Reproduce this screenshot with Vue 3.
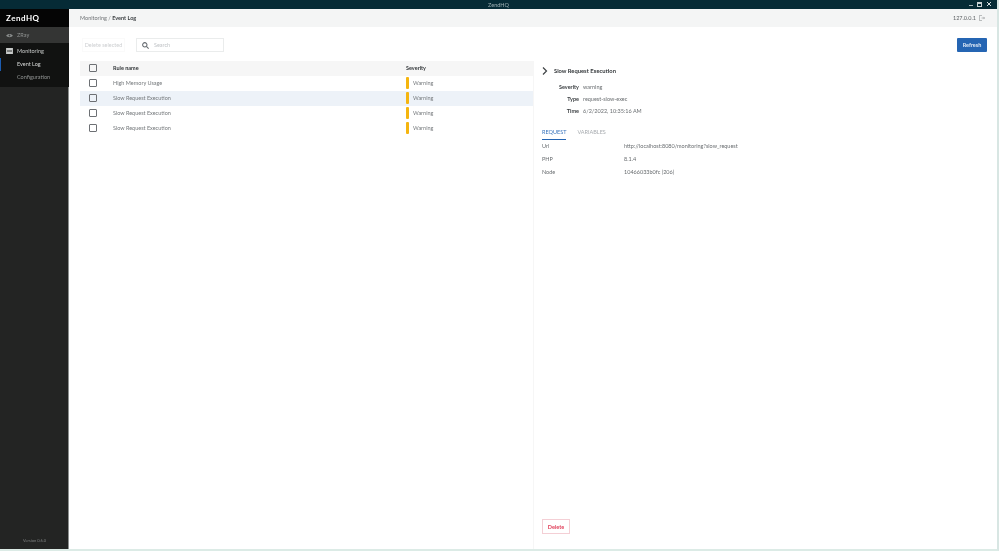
<script setup>
const rows = [
  { name: 'High Memory Usage', active: false },
  { name: 'Slow Request Execution', active: true },
  { name: 'Slow Request Execution', active: false },
  { name: 'Slow Request Execution', active: false },
]
const meta = [
  ['Severity', 'warning'],
  ['Type', 'request-slow-exec'],
  ['Time', '6/2/2022, 10:35:16 AM'],
]
const info = [
  ['Url', 'http://localhost:8080/monitoring?slow_request'],
  ['PHP', '8.1.4'],
  ['Node', '10466033b0fc (206)'],
]
</script>

<template>
  <div class="window">
    <header class="titlebar">
      <span class="title">ZendHQ</span>
      <div class="controls">
        <span class="min"></span>
        <span class="max"></span>
        <svg class="close" width="6" height="6" viewBox="0 0 6 6"><path d="M1 1l4 4M5 1L1 5" stroke="#d5dfe1" stroke-width="1" /></svg>
      </div>
    </header>
    <div class="body">
      <aside class="sidebar">
        <div class="logo">ZendHQ</div>
        <div class="nav-item zray">
          <svg width="7" height="5" viewBox="0 0 8 6"><path d="M0 3c1.500-2.600 6.500-2.600 8 0-1.500 2.600-6.500 2.600-8 0z" fill="#8b8f8e" /><circle cx="4" cy="3" r="1.100" fill="#3a3c3b" /></svg>
          <span>ZRay</span>
        </div>
        <div class="group">
          <div class="nav-item monitoring">
            <svg width="7" height="6" viewBox="0 0 8 7"><path d="M0 0h8v7H0z" fill="#c9cccb" /><path d="M1 3h6v1H1z" fill="#151716" /></svg>
            <span>Monitoring</span>
          </div>
          <div class="sub current">Event Log</div>
          <div class="sub">Configuration</div>
        </div>
        <div class="version">Version 0.6.0</div>
      </aside>
      <main class="main">
        <div class="topbar">
          <div class="crumb">Monitoring / <b>Event Log</b></div>
          <div class="host">
            <span>127.0.0.1</span>
            <svg width="6" height="6" viewBox="0 0 7 7" fill="none" stroke="#8c8f90" stroke-width=".7"><path d="M3.500.5H.5v6h3M3 3.500h3.500M5.200 2.200l1.300 1.300-1.300 1.300" /></svg>
          </div>
        </div>
        <div class="toolbar">
          <div class="tools-left">
            <button class="ghost">Delete selected</button>
            <div class="search">
              <svg width="7" height="7" viewBox="0 0 8 8" fill="none" stroke="#666b70" stroke-width="1.200"><circle cx="3.200" cy="3.200" r="2.500" /><path d="M5 5l2.600 2.600" /></svg>
              <span>Search</span>
            </div>
          </div>
          <button class="refresh">Refresh</button>
        </div>
        <div class="content">
          <section class="list">
            <div class="row head">
              <span class="check"></span>
              <span class="name">Rule name</span>
              <span class="severity">Severity</span>
            </div>
            <div v-for="(row, i) in rows" :key="i" class="row" :class="{ active: row.active }">
              <span class="check"></span>
              <span class="name">{{ row.name }}</span>
              <span class="severity"><i class="bar"></i>Warning</span>
            </div>
          </section>
          <section class="detail">
            <div class="detail-title">
              <svg width="6" height="8" viewBox="0 0 6 8" fill="none" stroke="#3f4346" stroke-width="1.200"><path d="M1 .5L4.500 4 1 7.500" /></svg>
              <span>Slow Request Execution</span>
            </div>
            <div class="meta">
              <template v-for="m in meta" :key="m[0]">
                <b>{{ m[0] }}</b><span>{{ m[1] }}</span>
              </template>
            </div>
            <div class="tabs">
              <span class="tab on">REQUEST</span>
              <span class="tab">VARIABLES</span>
            </div>
            <div class="info">
              <div v-for="m in info" :key="m[0]" class="info-row">
                <span class="k">{{ m[0] }}</span><span>{{ m[1] }}</span>
              </div>
            </div>
            <button class="delete">Delete</button>
          </section>
        </div>
      </main>
    </div>
  </div>
</template>

<style>
html, body { margin: 0; background: #fff; }
</style>

<style scoped>
.window { width: 999px; height: 551px; display: flex; flex-direction: column; overflow: hidden; box-sizing: border-box; border-right: 2px solid #d8e6e3; border-bottom: 2px solid #dcebe6; font-family: Lato, "Liberation Sans", sans-serif; font-size: 5.500px; color: #6a6e71; background: #fff; filter: blur(.35px); }
.titlebar { height: 9px; flex: none; background: #062b36; color: #9fb0b4; position: relative; display: flex; align-items: center; justify-content: center; }
.title { font-size: 5.500px; }
.controls { position: absolute; right: 5px; top: 1px; display: flex; gap: 4px; align-items: center; height: 6px; }
.min { width: 4px; height: 1px; background: #a8b5b8; margin-top: 3px; }
.max { width: 5px; height: 5px; border: 1px solid #c9d2d4; box-sizing: border-box; border-top-width: 2px; }
.body { flex: 1; display: flex; min-height: 0; }
.sidebar { width: 69px; flex: none; background: #232423; display: flex; flex-direction: column; color: #b9bcbb; box-shadow: inset -1px 0 0 #8c908f; }
.logo { height: 18px; background: #050505; color: #fff; font-size: 8px; font-weight: 700; letter-spacing: .5px; padding-left: 6px; display: flex; align-items: center; }
.nav-item { height: 16px; display: flex; align-items: center; gap: 4px; padding-left: 6px; }
.zray { background: #343534; color: #8f9291; }
.group { background: #111211; padding-bottom: 4px; }
.monitoring { height: 15px; color: #c6c9c8; }
.sub { height: 12.500px; line-height: 12.500px; padding-left: 17px; color: #929594; }
.current { color: #d5d7d6; box-shadow: inset 1px 0 0 #1c5cb0; }
.version { margin-top: auto; text-align: center; padding-bottom: 6px; font-size: 4px; color: #7e8180; }
.main { flex: 1; min-width: 0; display: flex; flex-direction: column; }
.topbar { height: 18px; flex: none; background: #f4f5f5; display: flex; align-items: center; justify-content: space-between; padding: 0 11px; box-sizing: border-box; color: #6f7376; }
.crumb b { color: #3b3f42; font-weight: 700; }
.host { display: flex; align-items: center; gap: 3px; color: #5f6366; padding-right: 1px; }
.toolbar { height: 33.500px; flex: none; display: flex; align-items: center; justify-content: space-between; padding: 2.500px 10px 0 13px; box-sizing: border-box; }
.tools-left { display: flex; align-items: center; gap: 11px; }
button { font-family: inherit; font-size: 5.500px; background: none; border: 0; padding: 0; margin: 0; }
.ghost { width: 43px; height: 14px; color: #cdcfd1; border: 1px solid #fafafa; }
.search { width: 88px; height: 14px; box-sizing: border-box; border: 1px solid #eaecec; display: flex; align-items: center; gap: 5px; padding-left: 5px; color: #bfc2c5; }
.refresh { width: 30px; height: 14px; background: #2565b3; color: #dfe9f5; font-weight: 700; border-radius: 1px; }
.content { flex: 1; min-height: 0; display: flex; padding-left: 11px; }
.list { width: 453px; flex: none; }
.row { height: 15.100px; display: flex; align-items: center; color: #75797c; }
.head { background: #f6f6f6; color: #33373a; font-weight: 700; }
.active { background: #edf2f8; }
.check { width: 6px; height: 6px; border: 1px solid #6d7074; border-radius: 1px; margin-left: 9px; flex: none; }
.name { width: 292px; margin-left: 16px; flex: none; }
.severity { display: flex; align-items: center; gap: 4px; margin-left: 1px; }
.bar { width: 3px; height: 12px; background: #f5b50f; border-radius: 1px; }
.detail { flex: 1; min-width: 0; position: relative; border-left: 1px solid #f6f6f6; padding: 0 11px 0 8px; box-sizing: border-box; }
.detail-title { display: flex; align-items: center; gap: 6px; height: 20px; color: #33373a; font-weight: 700; font-size: 5.800px; }
.meta { display: grid; grid-template-columns: 37px auto; column-gap: 4px; justify-content: start; grid-auto-rows: 12px; align-items: center; }
.meta b { text-align: right; color: #3b3f42; }
.tabs { display: flex; gap: 11px; margin-top: 12px; height: 10px; align-items: flex-start; color: #a7abaf; }
.tab { height: 10px; box-sizing: content-box; }
.on { color: #3a75bd; border-bottom: 1px solid #2565b3; }
.info-row { height: 13px; display: flex; align-items: center; }
.info { margin-top: 1px; }
.k { width: 82px; flex: none; }
.delete { position: absolute; left: 8px; bottom: 15px; width: 28px; height: 15px; color: #e0405a; font-weight: 700; border: 1px solid #f4cfd5; }
</style>
